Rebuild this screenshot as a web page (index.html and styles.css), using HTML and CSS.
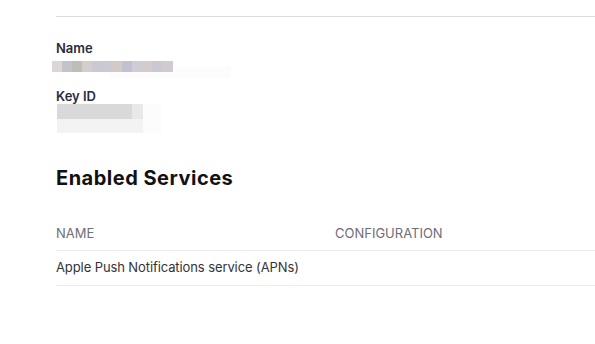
FILE: index.html
```html
<!DOCTYPE html>
<html lang="en">
<head>
    <meta charset="UTF-8">
    <meta name="viewport" content="width=device-width, initial-scale=1.0">
    <title>Key Details</title>
    <link rel="stylesheet" href="styles.css">
</head>
<body>

    <div class="page">
        <hr class="rule">

        <div class="field">
            <div class="field-label">Name</div>
            <div class="redacted redacted-name"></div>
        </div>

        <div class="field">
            <div class="field-label">Key ID</div>
            <div class="redacted redacted-key"></div>
        </div>

        <h2>Enabled Services</h2>

        <table class="services">
            <thead>
                <tr>
                    <th class="col-name">NAME</th>
                    <th>CONFIGURATION</th>
                </tr>
            </thead>
            <tbody>
                <tr>
                    <td>Apple Push Notifications service (APNs)</td>
                    <td></td>
                </tr>
            </tbody>
        </table>
    </div>

</body>
</html>
```

FILE: styles.css
```css
body {
    margin: 0;
    font-family: Inter, "Noto Sans", sans-serif;
    background-color: #ffffff;
    color: #1d1d1f;
}
.page {
    padding: 16px 0 0 56px;
}
.rule {
    border: none;
    border-top: 1px solid #dcdcdc;
    margin: 0;
}
.field {
    margin-top: 23px;
}
.field + .field {
    margin-top: 16px;
}
.field-label {
    font-size: 13px;
    font-weight: 600;
    color: #2c2b3b;
    line-height: 16px;
}
.redacted {
    margin-left: -4px;
}
.redacted-name {
    margin-top: 5px;
    width: 121px;
    height: 11px;
    background: linear-gradient(to right,
        #dbd7d6 0 10px, #c4c3ca 10px 20px, #bfbcbc 20px 30px, #d3cdcc 30px 40px,
        #c9c8d3 40px 50px, #ccc9d0 50px 60px, #d3cac8 60px 70px, #c3c0cf 70px 80px,
        #cfccd3 80px 90px, #d3cccb 90px 100px, #cbc8d1 100px 110px, #cfcbd0 110px 121px);
    box-shadow: 58px 6px 0 0 #fcfcfc;
}
.redacted-key {
    margin-left: 1px;
    width: 86px;
    height: 29px;
    background:
        linear-gradient(to bottom, transparent 0 15px, #f3f3f3 15px 29px),
        linear-gradient(to right, #dad9da 0 75px, #e8e7e9 75px 86px);
    box-shadow: 18px 0 0 0 #fcfcfc;
}
h2 {
    font-size: 20px;
    font-weight: 700;
    letter-spacing: 0.5px;
    color: #111114;
    margin: 33px 0 0;
    line-height: 24px;
}
.services {
    width: 100%;
    border-collapse: collapse;
    margin-top: 35px;
    font-size: 13px;
}
.services th {
    font-weight: 400;
    color: #6e6d7a;
    text-align: left;
    padding: 0 0 9px;
    border-bottom: 1px solid #ececec;
    line-height: 16px;
}
.services .col-name {
    width: 279px;
}
.services td {
    padding: 8px 0 10px;
    border-bottom: 1px solid #ececec;
    color: #333336;
    line-height: 16px;
    letter-spacing: -0.1px;
}
```
